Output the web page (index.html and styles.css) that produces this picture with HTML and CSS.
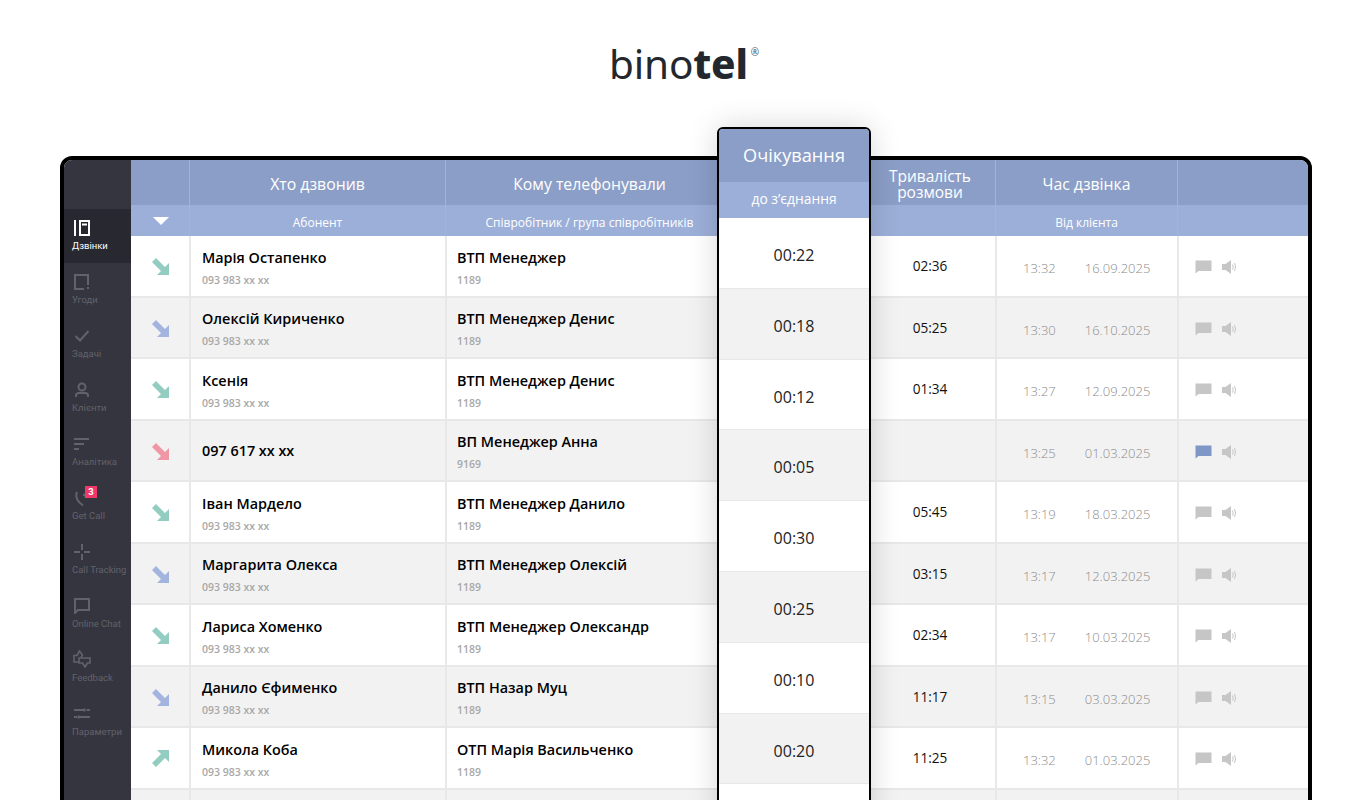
FILE: index.html
```html
<!DOCTYPE html>
<html lang="uk">
<head>
  <meta charset="UTF-8" />
  <title>Binotel</title>
  <link rel="stylesheet" href="styles.css">
</head>
<body>
  <svg class="defs" width="0" height="0">
    <symbol id="arrow" viewBox="0 0 17 17"><polygon points="0,4 4,0 13,9 17,5 17,17 5,17 9,13" /></symbol>
    <symbol id="chat" viewBox="0 0 17 14"><path d="M0.5 0.5H16.5V11H3.5L0.5 13.5Z" /></symbol>
    <symbol id="sound" viewBox="0 0 16 16">
      <path d="M0 5H3.5L9 1V15L3.5 11H0Z" />
      <path class="wave" d="M10.5 5.5Q12 8 10.5 10.5M12.5 4Q14.6 8 12.5 12" />
    </symbol>
  </svg>

  <div class="logo"><span>bino<b>tel</b></span><i>®</i></div>

  <div class="frame">
    <nav class="side">
      <a class="side-item active">
        <svg width="16" height="16" viewBox="0 0 16 16"><path d="M1 0V16M6 1H15V15H6ZM8 4.500H13" /></svg>
        <span>Дзвінки</span>
      </a>
      <a class="side-item">
        <svg width="16" height="16" viewBox="0 0 16 16"><path d="M14 11V1H1V15H10M14 13V15" /></svg>
        <span>Угоди</span>
      </a>
      <a class="side-item">
        <svg width="16" height="16" viewBox="0 0 16 16"><path d="M1.500 8L6 12.500L14.500 3" /></svg>
        <span>Задачі</span>
      </a>
      <a class="side-item">
        <svg width="16" height="16" viewBox="0 0 16 16"><circle cx="8" cy="5" r="3.500" /><path d="M2 15V13.500Q2 11 5 11H11Q14 11 14 13.500V15" /></svg>
        <span>Клієнти</span>
      </a>
      <a class="side-item">
        <svg width="16" height="16" viewBox="0 0 16 16"><path d="M0 3H15M0 8H10M0 13H5" /></svg>
        <span>Аналітика</span>
      </a>
      <a class="side-item">
        <svg width="16" height="16" viewBox="0 0 16 16"><path d="M3 2Q0 9 9 15.500M9 5H14M11.500 2.500V7.500" /></svg>
        <span>Get Call</span>
        <em class="badge">3</em>
      </a>
      <a class="side-item">
        <svg width="16" height="16" viewBox="0 0 16 16"><path d="M0 8H6M10 8H16M8 0V6M8 10V16" /></svg>
        <span>Call Tracking</span>
      </a>
      <a class="side-item">
        <svg width="16" height="16" viewBox="0 0 16 16"><path d="M1 1H15V12H4L1 15Z" /></svg>
        <span>Online Chat</span>
      </a>
      <a class="side-item">
        <svg class="thumbs" width="18" height="18" viewBox="0 0 18 18"><path d="M6 12H1V5.500H4L6.500 1L9.500 5L8 7M6 8H17V13H14.500L12 17L9.500 13H6Z" /></svg>
        <span>Feedback</span>
      </a>
      <a class="side-item">
        <svg width="16" height="16" viewBox="0 0 16 16"><path d="M0 4H10M12.500 4H16M0 11H3M5.500 11H16M10.500 2.500V5.500M4.500 9.500V12.500" /></svg>
        <span>Параметри</span>
      </a>
    </nav>

    <div class="table">
      <div class="head-top">
        <div></div>
        <div>Хто дзвонив</div>
        <div class="under-wait">Кому телефонували</div>
        <div class="plain two-line">Тривалість<br>розмови</div>
        <div>Час дзвінка</div>
        <div></div>
      </div>
      <div class="head-sub">
        <div class="sort"><span class="tri"></span></div>
        <div>Абонент</div>
        <div class="under-wait">Співробітник / група співробітників</div>
        <div class="plain"></div>
        <div>Від клієнта</div>
        <div></div>
      </div>

      <div class="row">
        <div class="dir"><svg class="arr teal"><use href="#arrow" /></svg></div>
        <div class="who"><b>Марія Остапенко</b><small>093 983 xx xx</small></div>
        <div class="who"><b>ВТП Менеджер</b><small>1189</small></div>
        <div class="dur">02:36</div>
        <div class="when"><span>13:32</span><span>16.09.2025</span></div>
        <div class="acts"><svg class="chat"><use href="#chat" /></svg><svg class="sound"><use href="#sound" /></svg></div>
      </div>
      <div class="row">
        <div class="dir"><svg class="arr blue"><use href="#arrow" /></svg></div>
        <div class="who"><b>Олексій Кириченко</b><small>093 983 xx xx</small></div>
        <div class="who"><b>ВТП Менеджер Денис</b><small>1189</small></div>
        <div class="dur">05:25</div>
        <div class="when"><span>13:30</span><span>16.10.2025</span></div>
        <div class="acts"><svg class="chat"><use href="#chat" /></svg><svg class="sound"><use href="#sound" /></svg></div>
      </div>
      <div class="row">
        <div class="dir"><svg class="arr teal"><use href="#arrow" /></svg></div>
        <div class="who"><b>Ксенія</b><small>093 983 xx xx</small></div>
        <div class="who"><b>ВТП Менеджер Денис</b><small>1189</small></div>
        <div class="dur">01:34</div>
        <div class="when"><span>13:27</span><span>12.09.2025</span></div>
        <div class="acts"><svg class="chat"><use href="#chat" /></svg><svg class="sound"><use href="#sound" /></svg></div>
      </div>
      <div class="row">
        <div class="dir"><svg class="arr pink"><use href="#arrow" /></svg></div>
        <div class="who solo"><b>097 617 xx xx</b></div>
        <div class="who"><b>ВП Менеджер Анна</b><small>9169</small></div>
        <div class="dur"></div>
        <div class="when"><span>13:25</span><span>01.03.2025</span></div>
        <div class="acts"><svg class="chat on"><use href="#chat" /></svg><svg class="sound"><use href="#sound" /></svg></div>
      </div>
      <div class="row">
        <div class="dir"><svg class="arr teal"><use href="#arrow" /></svg></div>
        <div class="who"><b>Іван Мардело</b><small>093 983 xx xx</small></div>
        <div class="who"><b>ВТП Менеджер Данило</b><small>1189</small></div>
        <div class="dur">05:45</div>
        <div class="when"><span>13:19</span><span>18.03.2025</span></div>
        <div class="acts"><svg class="chat"><use href="#chat" /></svg><svg class="sound"><use href="#sound" /></svg></div>
      </div>
      <div class="row">
        <div class="dir"><svg class="arr blue"><use href="#arrow" /></svg></div>
        <div class="who"><b>Маргарита Олекса</b><small>093 983 xx xx</small></div>
        <div class="who"><b>ВТП Менеджер Олексій</b><small>1189</small></div>
        <div class="dur">03:15</div>
        <div class="when"><span>13:17</span><span>12.03.2025</span></div>
        <div class="acts"><svg class="chat"><use href="#chat" /></svg><svg class="sound"><use href="#sound" /></svg></div>
      </div>
      <div class="row">
        <div class="dir"><svg class="arr teal"><use href="#arrow" /></svg></div>
        <div class="who"><b>Лариса Хоменко</b><small>093 983 xx xx</small></div>
        <div class="who"><b>ВТП Менеджер Олександр</b><small>1189</small></div>
        <div class="dur">02:34</div>
        <div class="when"><span>13:17</span><span>10.03.2025</span></div>
        <div class="acts"><svg class="chat"><use href="#chat" /></svg><svg class="sound"><use href="#sound" /></svg></div>
      </div>
      <div class="row">
        <div class="dir"><svg class="arr blue"><use href="#arrow" /></svg></div>
        <div class="who"><b>Данило Єфименко</b><small>093 983 xx xx</small></div>
        <div class="who"><b>ВТП Назар Муц</b><small>1189</small></div>
        <div class="dur">11:17</div>
        <div class="when"><span>13:15</span><span>03.03.2025</span></div>
        <div class="acts"><svg class="chat"><use href="#chat" /></svg><svg class="sound"><use href="#sound" /></svg></div>
      </div>
      <div class="row">
        <div class="dir"><svg class="arr teal up"><use href="#arrow" /></svg></div>
        <div class="who"><b>Микола Коба</b><small>093 983 xx xx</small></div>
        <div class="who"><b>ОТП Марія Васильченко</b><small>1189</small></div>
        <div class="dur">11:25</div>
        <div class="when"><span>13:32</span><span>01.03.2025</span></div>
        <div class="acts"><svg class="chat"><use href="#chat" /></svg><svg class="sound"><use href="#sound" /></svg></div>
      </div>
      <div class="row">
        <div class="dir"></div><div class="who"></div><div class="who"></div><div class="dur"></div><div class="when"></div><div class="acts"></div>
      </div>
    </div>
  </div>

  <!-- highlighted column, sits over the table -->
  <div class="wait">
    <div class="wait-title">Очікування</div>
    <div class="wait-sub">до з’єднання</div>
    <div class="wait-row">00:22</div>
    <div class="wait-row">00:18</div>
    <div class="wait-row">00:12</div>
    <div class="wait-row">00:05</div>
    <div class="wait-row">00:30</div>
    <div class="wait-row">00:25</div>
    <div class="wait-row">00:10</div>
    <div class="wait-row">00:20</div>
    <div class="wait-row"></div>
  </div>
</body>
</html>
```

FILE: styles.css
```css
html, body {
  margin: 0;
  height: 800px;
  overflow: hidden;
}

body {
  position: relative;
  background: #fff;
  font-family: "Open Sans", sans-serif;
  color: #000;
}

.defs {
  position: absolute;
}

.logo {
  height: 156px;
  display: flex;
  justify-content: center;
  box-sizing: border-box;
  font-family: "Noto Sans", sans-serif;
  font-size: 40.5px;
  line-height: 56px;
  padding: 36px 4px 0 0;
  color: #23272e;
  letter-spacing: -0.2px;
}

.logo b {
  font-weight: 800;
}

.logo i {
  font-style: normal;
  font-size: 10px;
  line-height: 10px;
  margin: 11px 0 0 3px;
  color: #555;
}

.frame {
  margin: 0 60px;
  height: 680px;
  display: flex;
  border: 4px solid #000;
  border-radius: 12px;
  overflow: hidden;
}

/* sidebar */
.side {
  width: 67px;
  flex: none;
  background: #35353f;
  padding-top: 49px;
  font-family: Roboto, sans-serif;
}

.side-item {
  position: relative;
  display: block;
  height: 54px;
  box-sizing: border-box;
  padding: 11px 0 0 8px;
  font-size: 9.5px;
  color: #62626b;
  white-space: nowrap;
}

.side-item svg {
  display: block;
  height: 16px;
  margin-left: 2px;
  fill: none;
  stroke: #62626b;
  stroke-width: 2;
}

.side-item svg.thumbs {
  height: 18px;
  margin: -2px 0 0 1px;
  stroke-width: 1.6;
}

.side-item span {
  display: block;
  margin-top: 3px;
  line-height: 14px;
}

.side-item.active {
  background: #282830;
  color: #fff;
}

.side-item.active svg {
  stroke: #fff;
}

.badge {
  position: absolute;
  left: 21px;
  top: 7px;
  width: 12px;
  height: 12px;
  background: #f0386b;
  color: #fff;
  font-style: normal;
  font-weight: 700;
  font-size: 9.5px;
  line-height: 12px;
  text-align: center;
}

/* table */
.table {
  flex: 1;
  min-width: 0;
}

.head-top,
.head-sub,
.row {
  display: grid;
  grid-template-columns: 58px 256px 420px 130px 182px 1fr;
}

.head-top {
  height: 45px;
  background: #8b9ec7;
  color: #fff;
  font-size: 15.8px;
  line-height: 48px;
  text-align: center;
}

.head-sub {
  height: 31px;
  background: #9cafd8;
  color: #fff;
  font-size: 12px;
  line-height: 36px;
  text-align: center;
}

.head-top > div,
.head-sub > div {
  border-left: 1px solid #a3b4da;
}

.head-top > div:first-child,
.head-sub > div:first-child,
.head-top > .plain,
.head-sub > .plain {
  border-left: none;
}

.head-top > .two-line {
  font-size: 15.5px;
  line-height: 16px;
  padding-top: 8px;
  box-sizing: border-box;
}

/* the right part of this column is covered by .wait */
.under-wait {
  padding-right: 132px;
}

.sort {
  display: flex;
  justify-content: center;
  padding: 12px 0 0 1px;
}

.tri {
  width: 0;
  height: 0;
  border-left: 8.5px solid transparent;
  border-right: 8.5px solid transparent;
  border-top: 8px solid #fff;
}

.row {
  height: 61.5px;
  box-sizing: border-box;
  border-bottom: 2px solid #e8e8e8;
  background: #fff;
}

.row:nth-child(even) {
  background: #f2f2f2;
}

.row > div {
  min-width: 0;
}

.dir {
  display: flex;
  justify-content: center;
  padding: 22px 0 0 1px;
}

.arr {
  width: 17px;
  height: 17px;
}

.arr.teal { fill: #93cdc1; }
.arr.blue { fill: #a3b5de; }
.arr.pink { fill: #f097a5; }
.arr.up { transform: scaleY(-1); }

.who {
  border-left: 2px solid #e8e8e8;
  padding: 10.75px 0 0 10px;
  display: flex;
  flex-direction: column;
  white-space: nowrap;
}

.who:nth-child(2) {
  padding-left: 11px;
}

.who b {
  font-size: 14.4px;
  line-height: 22px;
  font-weight: 600;
}

.who small {
  font-size: 10.5px;
  line-height: 22px;
  font-weight: 600;
  color: #a8a8a8;
}

.who.solo {
  padding-top: 6px;
  padding-bottom: 10px;
  justify-content: center;
}

.dur {
  font-size: 13.6px;
  line-height: 60.5px;
  text-align: center;
  color: #111;
}

.when {
  border-left: 2px solid #e8e8e8;
  padding-left: 26px;
  display: flex;
  gap: 29px;
  font-size: 13px;
  line-height: 64.5px;
  color: #8c8c8c;
  font-weight: 300;
}

.acts {
  border-left: 2px solid #e8e8e8;
  padding: 24px 0 0 16px;
  display: flex;
  gap: 10px;
  align-items: flex-start;
}

.chat {
  width: 17px;
  height: 14px;
  fill: #c6c6c6;
}

.chat.on {
  fill: #7e97c6;
}

.sound {
  width: 16px;
  height: 16px;
  margin-top: -1px;
  fill: #c6c6c6;
  stroke: none;
}

.wave {
  fill: none;
  stroke: #c6c6c6;
  stroke-width: 1;
}

/* highlighted column */
.wait {
  position: absolute;
  left: 717px;
  top: 127px;
  width: 154px;
  height: 720px;
  box-sizing: border-box;
  border: 2px solid #000;
  border-radius: 6px;
  overflow: hidden;
  background: #fff;
  text-align: center;
  box-shadow: 0 0 30px rgba(0, 0, 0, 0.16);
}

.wait-title {
  height: 53px;
  background: #8b9ec7;
  color: #fff;
  font-size: 18.2px;
  line-height: 53px;
}

.wait-sub {
  height: 36px;
  background: #9cafd8;
  color: #fff;
  font-size: 13.8px;
  line-height: 34px;
}

.wait-row {
  height: 70.8px;
  box-sizing: border-box;
  border-bottom: 1px solid #e8e8e8;
  font-size: 16px;
  line-height: 74.8px;
  color: #222;
  background: #fff;
}

.wait-row:nth-child(even) {
  background: #f2f2f2;
}
```
